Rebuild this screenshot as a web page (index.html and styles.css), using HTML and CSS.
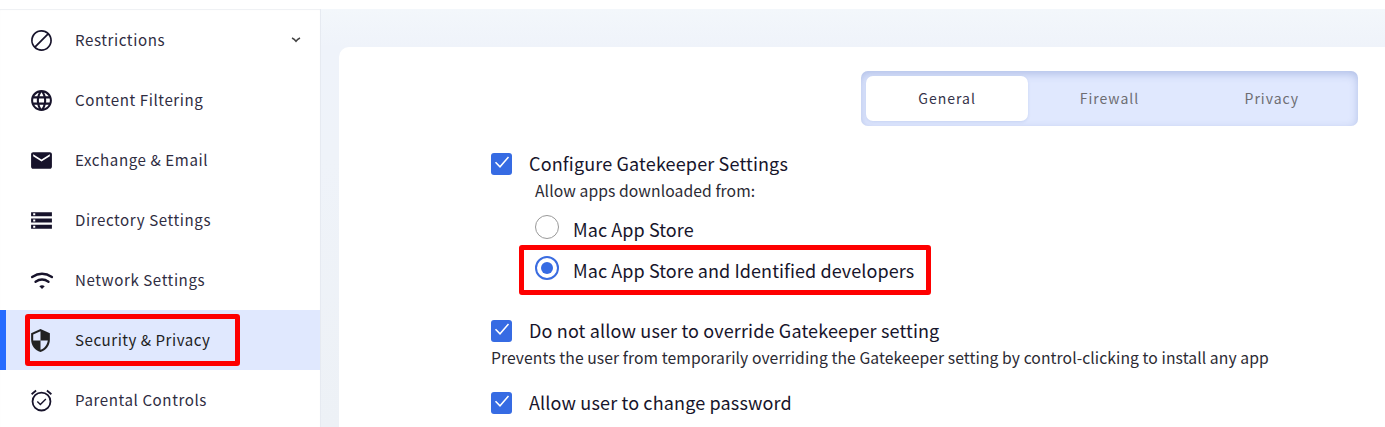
FILE: index.html
```html
<!DOCTYPE html>
<html lang="en">
<head>
    <meta charset="UTF-8">
    <meta name="viewport" content="width=device-width, initial-scale=1.0">
    <title>Security &amp; Privacy</title>
    <link rel="stylesheet" href="styles.css">
</head>
<body>

    <div class="layout">
        <nav class="sidebar">
            <a class="nav-item">
                <svg class="icon" viewBox="0 0 24 24"><path d="M12 2C6.480 2 2 6.480 2 12s4.480 10 10 10 10-4.480 10-10S17.520 2 12 2zm0 1.700a8.300 8.300 0 0 1 5.300 1.850L5.550 17.300A8.300 8.300 0 0 1 12 3.700zm0 16.600a8.300 8.300 0 0 1-5.250-1.850L18.450 6.700A8.300 8.300 0 0 1 12 20.300z"/></svg>
                <span>Restrictions</span>
                <svg class="chevron" viewBox="0 0 10 6"><path d="M1 1q2.500 1.200 4 3.300Q6.500 2.200 9 1"/></svg>
            </a>
            <a class="nav-item">
                <svg class="icon" viewBox="0 0 24 24"><path d="M11.990 2C6.470 2 2 6.480 2 12s4.470 10 9.990 10C17.520 22 22 17.520 22 12S17.520 2 11.990 2zm6.930 6h-2.950c-.32-1.250-.78-2.450-1.380-3.560 1.840.63 3.370 1.910 4.330 3.560zM12 4.040c.83 1.200 1.480 2.530 1.910 3.960h-3.820c.43-1.430 1.080-2.760 1.910-3.960zM4.260 14C4.100 13.360 4 12.690 4 12s.1-1.360.26-2h3.380c-.08.66-.14 1.320-.14 2s.06 1.340.14 2H4.260zm.82 2h2.950c.32 1.250.78 2.450 1.380 3.560-1.840-.63-3.370-1.900-4.330-3.560zm2.950-8H5.080c.96-1.660 2.490-2.930 4.330-3.560C8.810 5.550 8.350 6.750 8.030 8zM12 19.960c-.83-1.200-1.480-2.530-1.910-3.960h3.820c-.43 1.430-1.080 2.760-1.910 3.960zM14.340 14H9.660c-.09-.66-.16-1.320-.16-2s.07-1.350.16-2h4.680c.09.65.16 1.320.16 2s-.07 1.340-.16 2zm.25 5.560c.6-1.110 1.060-2.310 1.380-3.560h2.950c-.96 1.650-2.490 2.930-4.330 3.560zM16.360 14c.08-.66.14-1.320.14-2s-.06-1.340-.14-2h3.380c.16.64.26 1.310.26 2s-.1 1.360-.26 2h-3.380z"/></svg>
                <span>Content Filtering</span>
            </a>
            <a class="nav-item">
                <svg class="icon" viewBox="0 0 24 24"><path d="M20 4H4c-1.100 0-1.990.9-1.990 2L2 18c0 1.100.9 2 2 2h16c1.100 0 2-.9 2-2V6c0-1.100-.9-2-2-2zm0 4l-8 5-8-5V6l8 5 8-5v2z"/></svg>
                <span>Exchange &amp; Email</span>
            </a>
            <a class="nav-item">
                <svg class="icon" viewBox="0 0 24 24"><path d="M2 20h20v-4H2v4zm2-3h2v2H4v-2zM2 4v4h20V4H2zm4 3H4V5h2v2zm-4 7h20v-4H2v4zm2-3h2v2H4v-2z"/></svg>
                <span>Directory Settings</span>
            </a>
            <a class="nav-item">
                <svg class="icon wifi" viewBox="0 0 24 24"><path d="M3 8.700q9.500-6.200 19 0M6.300 13.200q6.200-4.200 12.400 0"/><path class="dot" d="M9.900 17.400q2.600-1.700 5.200 0l-2.600 2.700z"/></svg>
                <span>Network Settings</span>
            </a>
            <a class="nav-item active">
                <svg class="icon" viewBox="0 0 24 24"><path d="M12 1L3 5v6c0 5.550 3.840 10.740 9 12 5.160-1.260 9-6.450 9-12V5l-9-4zm0 10.990h7c-.53 4.120-3.280 7.790-7 8.940V12H5V6.300l7-3.110v8.800z"/></svg>
                <span>Security &amp; Privacy</span>
            </a>
            <a class="nav-item">
                <svg class="icon alarm" viewBox="0 0 24 24"><circle cx="12" cy="13" r="8.600"/><path d="M2.500 6l4.300-3.600M21.500 6l-4.300-3.600"/><path class="thin" d="M8 13l2.900 2.900 5.300-5.300"/></svg>
                <span>Parental Controls</span>
            </a>
        </nav>

        <main class="content">
            <section class="card">
                <div class="tabs">
                    <button class="tab selected">General</button>
                    <button class="tab">Firewall</button>
                    <button class="tab">Privacy</button>
                </div>

                <div class="settings">
                    <div class="setting">
                        <label class="check-row">
                            <svg class="checkbox" viewBox="0 0 21 22"><path d="M4.500 9.200l4.500 4.600 8.500-9.800"/></svg>
                            <span>Configure Gatekeeper Settings</span>
                        </label>
                        <div class="sources">
                            <p class="hint">Allow apps downloaded from:</p>
                            <label class="radio-row">
                                <span class="radio"></span>
                                <span class="radio-text">Mac App Store</span>
                            </label>
                            <label class="radio-row highlighted">
                                <span class="radio on"></span>
                                <span class="radio-text">Mac App Store and Identified developers</span>
                            </label>
                        </div>
                    </div>

                    <div class="setting">
                        <label class="check-row">
                            <svg class="checkbox" viewBox="0 0 21 22"><path d="M4.500 9.200l4.500 4.600 8.500-9.800"/></svg>
                            <span>Do not allow user to override Gatekeeper setting</span>
                        </label>
                        <p class="hint">Prevents the user from temporarily overriding the Gatekeeper setting by control-clicking to install any app</p>
                    </div>

                    <div class="setting">
                        <label class="check-row">
                            <svg class="checkbox" viewBox="0 0 21 22"><path d="M4.500 9.200l4.500 4.600 8.500-9.800"/></svg>
                            <span>Allow user to change password</span>
                        </label>
                    </div>
                </div>
            </section>
        </main>
    </div>

</body>
</html>
```
FILE: styles.css
```css
*,
*::before,
*::after {
    box-sizing: border-box;
}
body {
    margin: 0;
    height: 427px;
    overflow: hidden;
    background-color: #fff;
    font-family: "Noto Sans CJK SC", "Noto Sans", sans-serif;
    color: #17152b;
}
.layout {
    display: flex;
    height: 418px;
    margin-top: 9px;
}

/* Sidebar */
.sidebar {
    width: 321px;
    flex-shrink: 0;
    padding-top: 1px;
    border-right: 1px solid #e6eaf1;
    box-shadow: inset 0 1px 1px #eef0f3;
}
.nav-item {
    position: relative;
    display: flex;
    align-items: center;
    height: 60px;
    padding-left: 29px;
    font-size: 15.100px;
    letter-spacing: 0.590px;
    color: #2f2d42;
}
.nav-item span {
    margin-left: 21px;
    padding-bottom: 2px;
}
.icon {
    width: 25px;
    height: 25px;
    fill: #17132b;
}
.wifi path {
    fill: none;
    stroke: #17132b;
    stroke-width: 2.300;
    stroke-linecap: round;
}
.wifi .dot {
    fill: #17132b;
    stroke: none;
}
.alarm circle,
.alarm path {
    fill: none;
    stroke: #17132b;
    stroke-width: 1.700;
}
.alarm .thin {
    stroke-width: 1.300;
}
.chevron {
    width: 10px;
    height: 6px;
    margin-left: auto;
    margin-right: 19px;
    fill: none;
    stroke: #444;
    stroke-width: 1.500;
}
.active {
    padding-left: 22px;
    border-left: 6px solid #256bff;
    background-color: #e0e8fe;
    letter-spacing: 0.520px;
    color: #222;
}
.active span {
    margin-left: 22px;
}
.active .icon {
    fill: #222;
}
/* Red frame over the row */
.active::after {
    content: "";
    position: absolute;
    top: 4px;
    left: 19px;
    width: 215px;
    height: 52px;
    border: 5px solid #fe0000;
    border-radius: 3px;
}

/* Content */
.content {
    flex: 1;
    padding: 38px 0 0 18px;
    background: linear-gradient(180deg, #f3f7fb 0, #eff3fa 38px, #eff3f9 150px, #edf1f6 100%);
}
.card {
    height: 380px;
    padding: 24px 27px 0 152px;
    border-radius: 10px 0 0 0;
    background-color: #fff;
}
.tabs {
    display: flex;
    width: 497px;
    height: 55px;
    margin-left: auto;
    padding: 5px;
    border-radius: 7px;
    background-color: #e0e8fe;
    box-shadow: inset 0 3px 9px rgba(70, 100, 180, 0.3);
}
.tab {
    flex: 1;
    padding: 0 0 2px;
    border: none;
    border-radius: 7px;
    background: none;
    font-family: inherit;
    font-size: 14px;
    letter-spacing: 1px;
    color: #6d6d72;
}
.selected {
    background-color: #fff;
    color: #35334a;
    box-shadow: 0 1px 3px rgba(70, 100, 180, 0.15);
}

/* Settings */
.settings {
    padding-top: 24px;
}
.check-row {
    display: flex;
    align-items: center;
    height: 28px;
    font-size: 18px;
    letter-spacing: 0.150px;
    line-height: 26px;
}
.check-row span {
    padding-bottom: 2px;
}
.checkbox {
    width: 21px;
    height: 22px;
    margin-right: 17px;
    border-radius: 3px;
    background-color: #366be3;
    fill: none;
    stroke: #fff;
    stroke-width: 1.500;
}
.hint {
    margin: 0;
    height: 26px;
    font-size: 15.700px;
    letter-spacing: 0.080px;
    line-height: 26px;
    color: #2b2a33;
    white-space: nowrap;
}
.sources {
    padding-left: 44px;
}
.radio-row {
    position: relative;
    display: flex;
    height: 41px;
    padding-top: 11px;
    font-size: 18px;
    letter-spacing: 0.080px;
    line-height: 28px;
}
.radio {
    display: flex;
    align-items: center;
    justify-content: center;
    width: 24px;
    height: 24px;
    margin-right: 14px;
    border: 1px solid #999;
    border-radius: 50%;
}
.on {
    border: 2px solid #3a6ce0;
}
.on::before {
    content: "";
    width: 12px;
    height: 12px;
    border-radius: 50%;
    background-color: #366be3;
}
.highlighted::after {
    content: "";
    position: absolute;
    top: 0;
    left: -16px;
    width: 412px;
    height: 50px;
    border: 5px solid #fe0000;
    border-radius: 3px;
}
.setting + .setting {
    margin-top: 18px;
}
.setting:first-child {
    margin-bottom: 31px;
}
```
